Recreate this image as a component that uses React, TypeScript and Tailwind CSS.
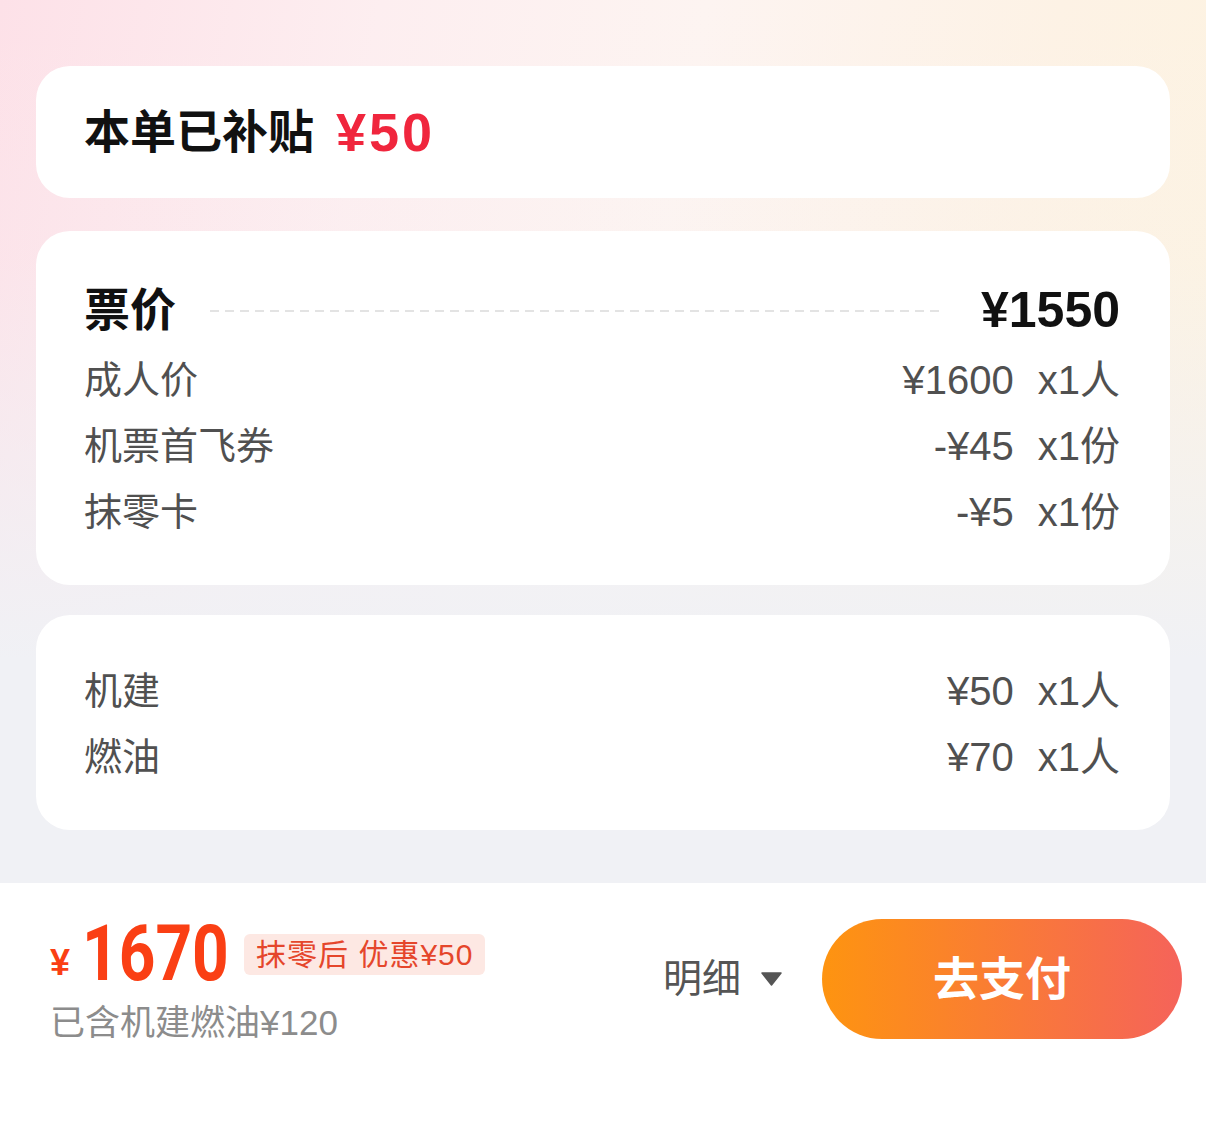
import { ReactNode } from "react";

const sans = "font-['Liberation_Sans','Noto_Sans_CJK_SC',sans-serif]";

type Line = { label: string; price: string; qty: string };

const ticketLines: Line[] = [
  { label: "成人价", price: "¥1600", qty: "x1人" },
  { label: "机票首飞券", price: "-¥45", qty: "x1份" },
  { label: "抹零卡", price: "-¥5", qty: "x1份" },
];

const taxLines: Line[] = [
  { label: "机建", price: "¥50", qty: "x1人" },
  { label: "燃油", price: "¥70", qty: "x1人" },
];

function Card({ children, className = "" }: { children: ReactNode; className?: string }) {
  return <div className={`mx-[36px] rounded-[34px] bg-white pl-[48px] pr-[50px] ${className}`}>{children}</div>;
}

function Row({ item }: { item: Line }) {
  return (
    <div className="flex h-[66px] items-center justify-between text-[#505050]">
      <span className="text-[38px]">{item.label}</span>
      <div className="flex items-center gap-[24px] text-[40px]">
        <span>{item.price}</span>
        <span>{item.qty}</span>
      </div>
    </div>
  );
}

export default function App() {
  return (
    <div className={`flex min-h-[1134px] w-full flex-col ${sans}`}>
      {/* price detail */}
      <div className="flex h-[883px] flex-col bg-[linear-gradient(to_bottom,rgba(240,241,245,0)_0px,rgba(240,241,245,0.1)_260px,#f0f1f5_660px),linear-gradient(100deg,#fde1e8_0%,#fdeef0_28%,#fdf4f1_52%,#fdf2e5_78%,#fdf3e0_100%)] pt-[66px]">
        <Card className="flex h-[132px] items-center">
          <span className="text-[46px] font-bold text-[#111]">本单已补贴</span>
          <span className="ml-[22px] text-[54px] font-bold tracking-[3px] text-[#f0263d]">¥50</span>
        </Card>

        <Card className="mt-[33px] pb-[40px] pt-[42px]">
          <div className="flex h-[74px] items-center">
            <span className="text-[46px] font-bold text-[#111]">票价</span>
            <div className="ml-[34px] mr-[42px] mt-[2px] h-[2px] flex-1 bg-[repeating-linear-gradient(to_right,#e3e3e3_0px,#e3e3e3_9px,transparent_9px,transparent_15px)]" />
            <span className="text-[50px] font-bold text-[#111]">¥1550</span>
          </div>
          {ticketLines.map((item) => (
            <Row key={item.label} item={item} />
          ))}
        </Card>

        <Card className="mt-[30px] pb-[40px] pt-[43px]">
          {taxLines.map((item) => (
            <Row key={item.label} item={item} />
          ))}
        </Card>
      </div>

      {/* bottom bar */}
      <div className="flex flex-1 items-start bg-white pl-[50px] pr-[24px] pt-[32px]">
        <div className="flex flex-col">
          <div className="flex items-center">
            <span className="mt-[18px] text-[36px] font-bold text-[#fa3f14]">¥</span>
            <span className="ml-[12px] mr-[-31px] inline-block origin-left scale-x-[0.82] font-['Roboto',sans-serif] text-[78px] font-bold leading-none text-[#fa3f14]">
              1670
            </span>
            <span className="ml-[14px] flex h-[41px] items-center rounded-[6px] bg-[#fde8e3] px-[12px] text-[30px] tracking-[1px] text-[#e5462b]">
              抹零后 优惠¥50
            </span>
          </div>
          <span className="mt-[4px] text-[35px] text-[#8c8c8c]">已含机建燃油¥120</span>
        </div>

        <div className="ml-auto mt-[4px] flex items-center">
          <span className="text-[39px] text-[#555]">明细</span>
          <svg className="ml-[20px]" width="21" height="14" viewBox="0 0 21 14">
            <path d="M1 1 L20 1 L10.5 13 Z" fill="#555" stroke="#555" strokeWidth="1.5" strokeLinejoin="round" />
          </svg>
          <button className="ml-[40px] flex h-[120px] w-[360px] items-center justify-center rounded-full bg-[linear-gradient(to_right,#fe9410,#f5635a)] text-[46px] font-bold text-white">
            去支付
          </button>
        </div>
      </div>
    </div>
  );
}
